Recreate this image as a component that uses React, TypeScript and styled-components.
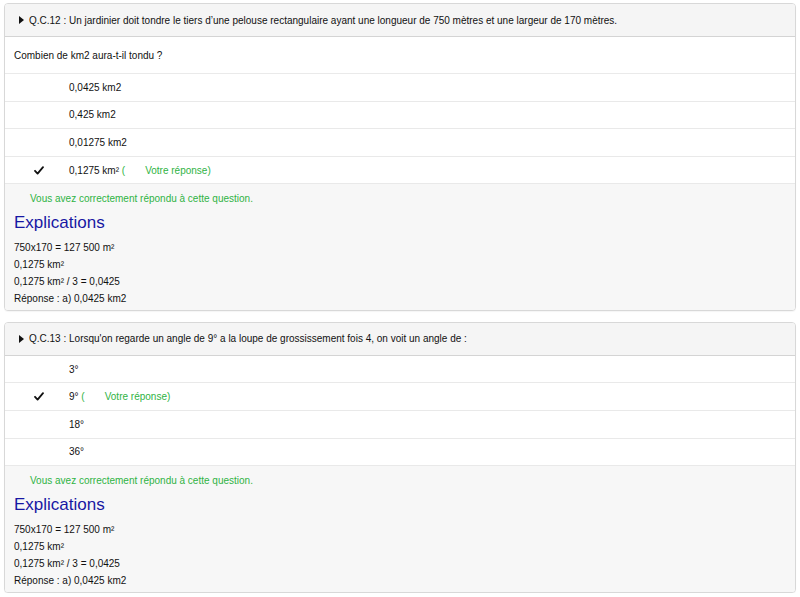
import React from "react";
import styled, { createGlobalStyle } from "styled-components";

const Global = createGlobalStyle`
  html, body { margin: 0; padding: 0; background: #fff; }
  body { font-family: "Liberation Sans", Arial, sans-serif; font-size: 10px; color: #111; }
`;

const Page = styled.div`
  padding: 3px 4px 0 4px;
  display: flex;
  flex-direction: column;
  gap: 11px;
`;

const Card = styled.div`
  border: 1px solid #d8d8d8;
  border-radius: 4px;
  background: #fff;
  overflow: hidden;
  box-shadow: 0 1px 1px rgba(0,0,0,0.04);
`;

const Header = styled.div`
  background: #f5f5f5;
  border-bottom: 1px solid #d4d4d4;
  height: 32px;
  display: flex;
  align-items: center;
  padding-left: 14px;
  gap: 5px;
  font-size: 10px;
`;

const Prompt = styled.div`
  height: 36px;
  display: flex;
  align-items: center;
  padding-left: 9px;
  border-bottom: 1px solid #eaeaea;
`;

const Option = styled.div`
  height: 26.6px;
  display: flex;
  align-items: center;
  border-bottom: 1px solid #e9e9e9;
  &:last-of-type { border-bottom: 1px solid #e0e0e0; }
`;

const Mark = styled.div`
  width: 64px;
  display: flex;
  justify-content: flex-start;
  padding-left: 29px;
  box-sizing: border-box;
`;

const Green = styled.span`
  color: #2fb344;
`;

const Footer = styled.div`
  background: #f7f7f7;
  padding: 6.5px 9px 2.5px 9px;
`;

const Success = styled.div`
  color: #2fb344;
  padding-left: 16px;
  line-height: 16px;
`;

const Title = styled.div`
  color: #1717a3;
  font-size: 17px;
  line-height: 20px;
  margin: 6px 0 6px 0;
`;

const Line = styled.div`
  line-height: 17.1px;
`;

const Tri = () => (
  <svg width="5" height="8" viewBox="0 0 5 8"><path d="M0 0 L5 4 L0 8 Z" fill="#111" /></svg>
);

const Check = () => (
  <svg width="10" height="9" viewBox="0 0 10 9"><path d="M1 4.8 L3.6 7.6 L9 1.2" stroke="#111" strokeWidth="1.8" fill="none" strokeLinecap="round" strokeLinejoin="round" /></svg>
);

type Opt = { text: string; chosen?: boolean };

const Explain = () => (
  <>
    <Line>750x170 = 127 500 m²</Line>
    <Line>0,1275 km²</Line>
    <Line>0,1275 km² / 3 = 0,0425</Line>
    <Line>Réponse : a) 0,0425 km2</Line>
  </>
);

const Question = ({ title, prompt, options }: { title: string; prompt?: string; options: Opt[] }) => (
  <Card>
    <Header><Tri /><span>{title}</span></Header>
    {prompt && <Prompt>{prompt}</Prompt>}
    {options.map((o, i) => (
      <Option key={i}>
        <Mark>{o.chosen && <Check />}</Mark>
        <span>
          {o.text}
          {o.chosen && (
            <>
              {" "}<Green>(</Green>
              <Green style={{ marginLeft: 20 }}>Votre réponse)</Green>
            </>
          )}
        </span>
      </Option>
    ))}
    <Footer>
      <Success>Vous avez correctement répondu à cette question.</Success>
      <Title>Explications</Title>
      <Explain />
    </Footer>
  </Card>
);

export default function App() {
  return (
    <>
      <Global />
      <Page>
        <Question
          title="Q.C.12 : Un jardinier doit tondre le tiers d’une pelouse rectangulaire ayant une longueur de 750 mètres et une largeur de 170 mètres."
          prompt="Combien de km2 aura-t-il tondu ?"
          options={[
            { text: "0,0425 km2" },
            { text: "0,425 km2" },
            { text: "0,01275 km2" },
            { text: "0,1275 km²", chosen: true },
          ]}
        />
        <Question
          title="Q.C.13 : Lorsqu'on regarde un angle de 9° a la loupe de grossissement fois 4, on voit un angle de :"
          options={[
            { text: "3°" },
            { text: "9°", chosen: true },
            { text: "18°" },
            { text: "36°" },
          ]}
        />
      </Page>
    </>
  );
}
